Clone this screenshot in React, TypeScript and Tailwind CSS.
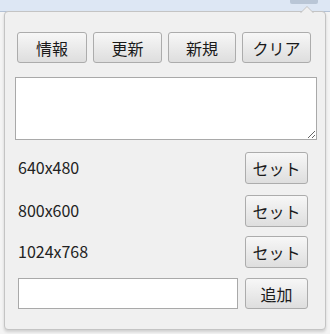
import { useState } from "react";

const font = { fontFamily: '"Noto Sans CJK JP", "Noto Sans", sans-serif' };

function Btn({ label, w }: { label: string; w: string }) {
  return (
    <button
      className={`${w} h-[31px] shrink-0 rounded-[3px] border border-[#acacac] bg-gradient-to-b from-[#f7f7f7] to-[#dedede] text-[16px] text-[#1a1a1a] leading-none`}
    >
      {label}
    </button>
  );
}

const sizes = ["640x480", "800x600", "1024x768"];
const gaps = ["mt-[12px]", "mt-[11px]", "mt-[9px]"];

export default function App() {
  const [memo, setMemo] = useState("");
  const [name, setName] = useState("");

  return (
    <div className="relative w-[330px] h-[334px] bg-[#f4f4f4] overflow-hidden" style={font}>
      {/* browser toolbar strip */}
      <div className="h-[12px] bg-[#dde7f4] border-b border-[#b4c2d6]" />
      <div className="absolute top-0 left-[290px] w-[28px] h-[4px] bg-[#b9c6d6] rounded-b-[2px]" />
      <div className="absolute top-[6px] left-[300px] w-0 h-0 border-l-[7px] border-r-[7px] border-b-[7px] border-l-transparent border-r-transparent border-b-[#c4c4c4]" />
      <div className="absolute top-[7px] left-[301px] w-0 h-0 border-l-[6px] border-r-[6px] border-b-[6px] border-l-transparent border-r-transparent border-b-[#f0f0f0]" />

      <div className="ml-[4px] mt-[-1px] w-[322px] h-[319px] rounded-[4px] border border-[#c4c4c4] bg-[#f0f0f0] shadow-[0_2px_3px_rgba(0,0,0,0.15)]">
        <div className="flex gap-[6px] ml-[12px] mt-[20px]">
          <Btn label="情報" w="w-[70px]" />
          <Btn label="更新" w="w-[69px]" />
          <Btn label="新規" w="w-[68px]" />
          <Btn label="クリア" w="w-[69px]" />
        </div>

        <textarea
          value={memo}
          onChange={(e) => setMemo(e.target.value)}
          className="block ml-[10px] mt-[14px] w-[302px] h-[63px] border border-[#a9a9a9] bg-white resize-y outline-none"
        />

        {sizes.map((s, i) => (
          <div key={s} className={`flex items-center ${gaps[i]} h-[32px]`}>
            <span className="ml-[13px] text-[16px] text-[#222] -mt-[2px]">{s}</span>
            <div className="ml-auto mr-[17px]">
              <Btn label="セット" w="w-[63px] h-[32px]" />
            </div>
          </div>
        ))}

        <div className="flex items-center mt-[10px]">
          <input
            value={name}
            onChange={(e) => setName(e.target.value)}
            className="ml-[13px] w-[220px] h-[31px] border border-[#a9a9a9] bg-white outline-none px-1"
          />
          <div className="ml-auto mr-[17px]">
            <Btn label="追加" w="w-[63px]" />
          </div>
        </div>
      </div>
    </div>
  );
}
